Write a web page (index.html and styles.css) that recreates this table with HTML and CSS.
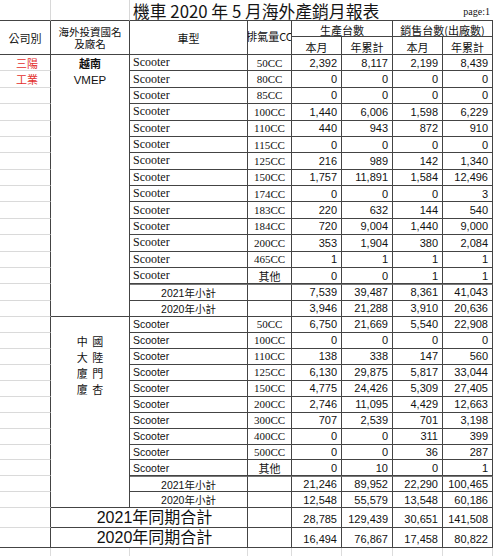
FILE: index.html
```html
<!DOCTYPE html>
<html lang="zh-Hant">
<head>
<meta charset="utf-8">
<title>機車 2020 年 5 月海外產銷月報表</title>
<link rel="stylesheet" href="styles.css">
</head>
<body>
<div class="sheet">
  <div class="t0"></div><div class="t0"></div>
  <div class="title"><span class="ttl">機車 2020 年 5 月海外產銷月報表</span><span class="page">page:1</span></div>

  <div class="h h2">公司別</div>
  <div class="h h2"><span class="two"><span class="ln">海外投資國名</span><span class="ln">及廠名</span></span></div>
  <div class="h h2">車型</div>
  <div class="h h2 hx"><span>排氣量CC</span></div>
  <div class="h hs ha">生產台數</div>
  <div class="h hs ha">銷售台數(出廠數)</div>
  <div class="h hb">本月</div><div class="h hb">年累計</div><div class="h hb">本月</div><div class="h hb">年累計</div>

  <!-- Vietnam / VMEP -->
  <div class="f red">三陽</div><div class="g bold">越南</div><div class="c sc">Scooter</div><div class="c cc">50CC</div><div class="c n">2,392</div><div class="c n">8,117</div><div class="c n">2,199</div><div class="c n">8,439</div>
  <div class="f red">工業</div><div class="g lat">VMEP</div><div class="c sc">Scooter</div><div class="c cc">80CC</div><div class="c n">0</div><div class="c n">0</div><div class="c n">0</div><div class="c n">0</div>
  <div class="f"></div><div class="g"></div><div class="c sc">Scooter</div><div class="c cc">85CC</div><div class="c n">0</div><div class="c n">0</div><div class="c n">0</div><div class="c n">0</div>
  <div class="f"></div><div class="g"></div><div class="c sc">Scooter</div><div class="c cc">100CC</div><div class="c n">1,440</div><div class="c n">6,006</div><div class="c n">1,598</div><div class="c n">6,229</div>
  <div class="f"></div><div class="g"></div><div class="c sc">Scooter</div><div class="c cc">110CC</div><div class="c n">440</div><div class="c n">943</div><div class="c n">872</div><div class="c n">910</div>
  <div class="f"></div><div class="g"></div><div class="c sc">Scooter</div><div class="c cc">115CC</div><div class="c n">0</div><div class="c n">0</div><div class="c n">0</div><div class="c n">0</div>
  <div class="f"></div><div class="g"></div><div class="c sc">Scooter</div><div class="c cc">125CC</div><div class="c n">216</div><div class="c n">989</div><div class="c n">142</div><div class="c n">1,340</div>
  <div class="f"></div><div class="g"></div><div class="c sc">Scooter</div><div class="c cc">150CC</div><div class="c n">1,757</div><div class="c n">11,891</div><div class="c n">1,584</div><div class="c n">12,496</div>
  <div class="f"></div><div class="g"></div><div class="c sc">Scooter</div><div class="c cc">174CC</div><div class="c n">0</div><div class="c n">0</div><div class="c n">0</div><div class="c n">3</div>
  <div class="f"></div><div class="g"></div><div class="c sc">Scooter</div><div class="c cc">183CC</div><div class="c n">220</div><div class="c n">632</div><div class="c n">144</div><div class="c n">540</div>
  <div class="f"></div><div class="g"></div><div class="c sc">Scooter</div><div class="c cc">184CC</div><div class="c n">720</div><div class="c n">9,004</div><div class="c n">1,440</div><div class="c n">9,000</div>
  <div class="f"></div><div class="g"></div><div class="c sc">Scooter</div><div class="c cc">200CC</div><div class="c n">353</div><div class="c n">1,904</div><div class="c n">380</div><div class="c n">2,084</div>
  <div class="f"></div><div class="g"></div><div class="c sc">Scooter</div><div class="c cc">465CC</div><div class="c n">1</div><div class="c n">1</div><div class="c n">1</div><div class="c n">1</div>
  <div class="f"></div><div class="g"></div><div class="c sc">Scooter</div><div class="c cc cjk">其他</div><div class="c n">0</div><div class="c n">0</div><div class="c n">1</div><div class="c n">1</div>
  <div class="f"></div><div class="g"></div><div class="c st sub">2021年小計</div><div class="c sub"></div><div class="c n sub">7,539</div><div class="c n sub">39,487</div><div class="c n sub">8,361</div><div class="c n sub">41,043</div>
  <div class="f"></div><div class="g gl"></div><div class="c st">2020年小計</div><div class="c"></div><div class="c n">3,946</div><div class="c n">21,288</div><div class="c n">3,910</div><div class="c n">20,636</div>

  <!-- China / Xiamen -->
  <div class="f"></div><div class="g"></div><div class="c ss">Scooter</div><div class="c cc">50CC</div><div class="c n">6,750</div><div class="c n">21,669</div><div class="c n">5,540</div><div class="c n">22,908</div>
  <div class="f"></div><div class="g cjk sp">中 國</div><div class="c ss">Scooter</div><div class="c cc">100CC</div><div class="c n">0</div><div class="c n">0</div><div class="c n">0</div><div class="c n">0</div>
  <div class="f"></div><div class="g cjk sp">大 陸</div><div class="c ss">Scooter</div><div class="c cc">110CC</div><div class="c n">138</div><div class="c n">338</div><div class="c n">147</div><div class="c n">560</div>
  <div class="f"></div><div class="g cjk sp">廈 門</div><div class="c ss">Scooter</div><div class="c cc">125CC</div><div class="c n">6,130</div><div class="c n">29,875</div><div class="c n">5,817</div><div class="c n">33,044</div>
  <div class="f"></div><div class="g cjk sp">廈 杏</div><div class="c ss">Scooter</div><div class="c cc">150CC</div><div class="c n">4,775</div><div class="c n">24,426</div><div class="c n">5,309</div><div class="c n">27,405</div>
  <div class="f"></div><div class="g"></div><div class="c ss">Scooter</div><div class="c cc">200CC</div><div class="c n">2,746</div><div class="c n">11,095</div><div class="c n">4,429</div><div class="c n">12,663</div>
  <div class="f"></div><div class="g"></div><div class="c ss">Scooter</div><div class="c cc">300CC</div><div class="c n">707</div><div class="c n">2,539</div><div class="c n">701</div><div class="c n">3,198</div>
  <div class="f"></div><div class="g"></div><div class="c ss">Scooter</div><div class="c cc">400CC</div><div class="c n">0</div><div class="c n">0</div><div class="c n">311</div><div class="c n">399</div>
  <div class="f"></div><div class="g"></div><div class="c ss">Scooter</div><div class="c cc">500CC</div><div class="c n">0</div><div class="c n">0</div><div class="c n">36</div><div class="c n">287</div>
  <div class="f"></div><div class="g"></div><div class="c ss">Scooter</div><div class="c cc cjk">其他</div><div class="c n">0</div><div class="c n">10</div><div class="c n">0</div><div class="c n">1</div>
  <div class="f"></div><div class="g"></div><div class="c st sub">2021年小計</div><div class="c sub"></div><div class="c n sub">21,246</div><div class="c n sub">89,952</div><div class="c n sub">22,290</div><div class="c n sub">100,465</div>
  <div class="f"></div><div class="g gl"></div><div class="c st">2020年小計</div><div class="c"></div><div class="c n">12,548</div><div class="c n">55,579</div><div class="c n">13,548</div><div class="c n">60,186</div>

  <!-- Totals -->
  <div class="f"></div><div class="c tot">2021年同期合計</div><div class="c"></div><div class="c n nb">28,785</div><div class="c n nb">129,439</div><div class="c n nb">30,651</div><div class="c n nb">141,508</div>
  <div class="f fl"></div><div class="c tot">2020年同期合計</div><div class="c"></div><div class="c n nb">16,494</div><div class="c n nb">76,867</div><div class="c n nb">17,458</div><div class="c n nb">80,822</div>

  <div class="e"></div><div class="e"></div><div class="e"></div><div class="e"></div><div class="e"></div><div class="e"></div><div class="e"></div><div class="e"></div>
</div>
</body>
</html>
```

FILE: styles.css
```css
* { box-sizing: border-box; }

html, body {
  margin: 0;
  padding: 0;
  background: #ffffff;
}

body {
  color: #111111;
  font-family: "Liberation Sans", "Noto Sans CJK TC", sans-serif;
}

.sheet {
  display: grid;
  width: 493px;
  height: 556px;
  grid-template-columns: 51px 79px 118px 44px 50px 51px 50px 50px;
  grid-template-rows: 21px 16px 18px repeat(16, 16.375px) repeat(12, 15.95px) 20px 20px 1fr;
}

.sheet > div {
  display: flex;
  align-items: center;
  overflow: hidden;
  white-space: nowrap;
  min-width: 0;
  min-height: 0;
}

/* title row */
.t0 {
  border-right: 1px solid #d8d8d8;
  border-bottom: 1px solid #444444;
}

.sheet > .title {
  grid-column: span 6;
  border-bottom: 1px solid #444444;
  justify-content: space-between;
  align-items: flex-end;
  overflow: visible;
  padding: 0 3px 0 3px;
}

.ttl {
  font-family: "Noto Sans CJK TC", "Liberation Sans", sans-serif;
  font-size: 16.8px;
  line-height: 17px;
  color: #151515;
}

.page {
  font-family: "Liberation Serif", serif;
  font-size: 10px;
  line-height: 12px;
  padding-bottom: 2px;
}

/* header */
.h {
  border-right: 1px solid #444444;
  border-bottom: 1px solid #444444;
  justify-content: center;
  font-family: "Noto Sans CJK TC", sans-serif;
  font-size: 11px;
  line-height: 12px;
}

.h2 { grid-row: span 2; }
.hs { grid-column: span 2; }
.ha { padding-top: 2px; }
.hb { padding-top: 2px; }

.two {
  display: flex;
  flex-direction: column;
  align-items: center;
  gap: 0;
  font-size: 10.5px;
  line-height: 12px;
  padding-top: 1px;
}

.ln {
  display: block;
  height: 12px;
  line-height: 12px;
  overflow: visible;
}

.hx { padding-bottom: 3px; }

/* body cells */
.c {
  border-right: 1px solid #444444;
  border-bottom: 1px solid #444444;
}

.sub {
  border-top: 1px solid #777777;
}

.f {
  border-right: 1px solid #444444;
  border-bottom: 1px solid #dadada;
  justify-content: center;
  font-family: "Noto Sans CJK TC", sans-serif;
  font-size: 11px;
}

.fl { border-bottom: 1px solid #444444; }

.red {
  color: #e3302c;
  padding-left: 4px;
}

.g {
  border-right: 1px solid #444444;
  justify-content: center;
  font-size: 11px;
}

.gl { border-bottom: 1px solid #444444; }

.bold {
  font-family: "Noto Sans CJK TC", sans-serif;
  font-weight: 700;
}

.lat {
  font-family: "Liberation Sans", sans-serif;
  font-size: 11.5px;
}

.cjk {
  font-family: "Noto Sans CJK TC", sans-serif;
}

.sp {
  word-spacing: 2px;
}

.sc {
  font-family: "Liberation Serif", serif;
  font-size: 12px;
  padding-left: 3px;
}

.ss {
  font-family: "Liberation Sans", sans-serif;
  font-size: 10.5px;
  padding-left: 3px;
}

.cc {
  justify-content: center;
  font-family: "Liberation Serif", serif;
  font-size: 11px;
}

.cc.cjk {
  font-family: "Noto Sans CJK TC", sans-serif;
  font-size: 11px;
}

.st {
  justify-content: center;
  font-family: "Liberation Sans", "Noto Sans CJK TC", sans-serif;
  font-size: 10.5px;
}

.n {
  justify-content: flex-end;
  padding-right: 4px;
  font-family: "Liberation Sans", sans-serif;
  font-size: 11px;
}

.sheet > .nb {
  align-items: flex-end;
  padding-bottom: 2px;
}

.sheet > .tot {
  grid-column: span 2;
  justify-content: center;
  align-items: flex-end;
  padding-left: 11px;
  padding-bottom: 0;
  font-family: "Liberation Sans", "Noto Sans CJK TC", sans-serif;
  font-size: 16px;
  line-height: 19px;
}

.e {
  border-right: 1px solid #dcdcdc;
}
```
